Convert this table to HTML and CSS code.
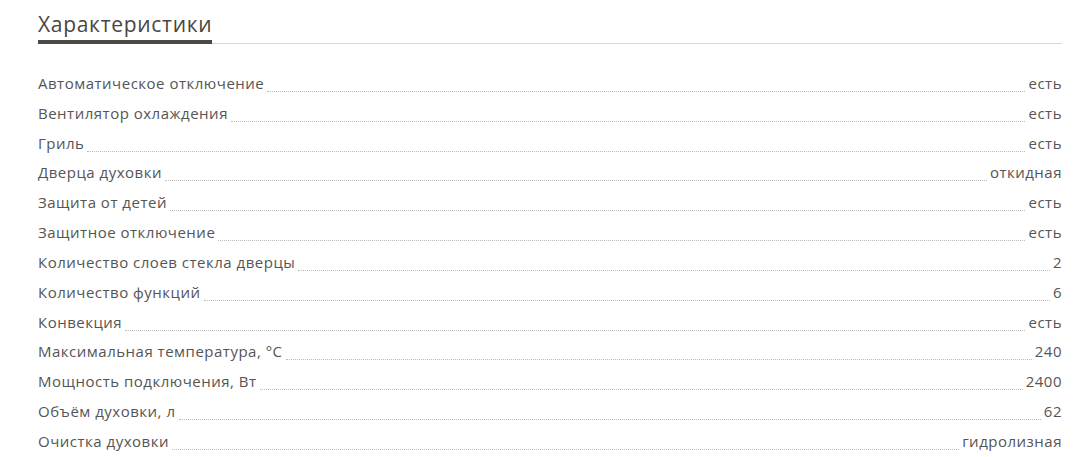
FILE: index.html
```html
<!DOCTYPE html>
<html lang="ru">
<head>
<meta charset="utf-8">
<link rel="stylesheet" href="styles.css">
</head>
<body>
<section class="specs">
  <div class="specs-head"><h2 class="specs-title">Характеристики</h2></div>
  <ul class="specs-list">
    <li class="spec"><span class="spec-name">Автоматическое отключение</span><span class="spec-dots"></span><span class="spec-val">есть</span></li>
    <li class="spec"><span class="spec-name">Вентилятор охлаждения</span><span class="spec-dots"></span><span class="spec-val">есть</span></li>
    <li class="spec"><span class="spec-name">Гриль</span><span class="spec-dots"></span><span class="spec-val">есть</span></li>
    <li class="spec"><span class="spec-name">Дверца духовки</span><span class="spec-dots"></span><span class="spec-val">откидная</span></li>
    <li class="spec"><span class="spec-name">Защита от детей</span><span class="spec-dots"></span><span class="spec-val">есть</span></li>
    <li class="spec"><span class="spec-name">Защитное отключение</span><span class="spec-dots"></span><span class="spec-val">есть</span></li>
    <li class="spec"><span class="spec-name">Количество слоев стекла дверцы</span><span class="spec-dots"></span><span class="spec-val">2</span></li>
    <li class="spec"><span class="spec-name">Количество функций</span><span class="spec-dots"></span><span class="spec-val">6</span></li>
    <li class="spec"><span class="spec-name">Конвекция</span><span class="spec-dots"></span><span class="spec-val">есть</span></li>
    <li class="spec"><span class="spec-name">Максимальная температура, °C</span><span class="spec-dots"></span><span class="spec-val">240</span></li>
    <li class="spec"><span class="spec-name">Мощность подключения, Вт</span><span class="spec-dots"></span><span class="spec-val">2400</span></li>
    <li class="spec"><span class="spec-name">Объём духовки, л</span><span class="spec-dots"></span><span class="spec-val">62</span></li>
    <li class="spec"><span class="spec-name">Очистка духовки</span><span class="spec-dots"></span><span class="spec-val">гидролизная</span></li>
  </ul>
</section>
</body>
</html>
```
FILE: styles.css
```css
html, body {
  margin: 0;
  padding: 0;
  background: #fff;
}
body {
  font-family: "Open Sans", "DejaVu Sans", sans-serif;
  color: #555;
}
.specs {
  width: 1024px;
  margin-left: 38px;
  padding-top: 10px;
}
.specs-head {
  border-bottom: 1px solid #d6d6d6;
}
.specs-title {
  display: inline-block;
  margin: 0 0 -1px 0;
  font-size: 21px;
  font-weight: 400;
  line-height: 29px;
  color: #4a4542;
  padding-bottom: 1px;
  border-bottom: 4px solid #4e4843;
  letter-spacing: 0.7px;
}
.specs-list {
  list-style: none;
  margin: 29px 0 0 0;
  padding: 0;
}
.spec {
  display: flex;
  align-items: baseline;
  height: 29.83px;
  font-size: 15px;
  line-height: 20px;
  letter-spacing: 0.5px;
}
.spec-name {
  flex: none;
}
.spec-dots {
  flex: 1;
  margin: 0 3px;
  border-bottom: 1px dotted #bdbdbd;
  position: relative;
  top: 3px;
}
.spec-val {
  flex: none;
}
```
